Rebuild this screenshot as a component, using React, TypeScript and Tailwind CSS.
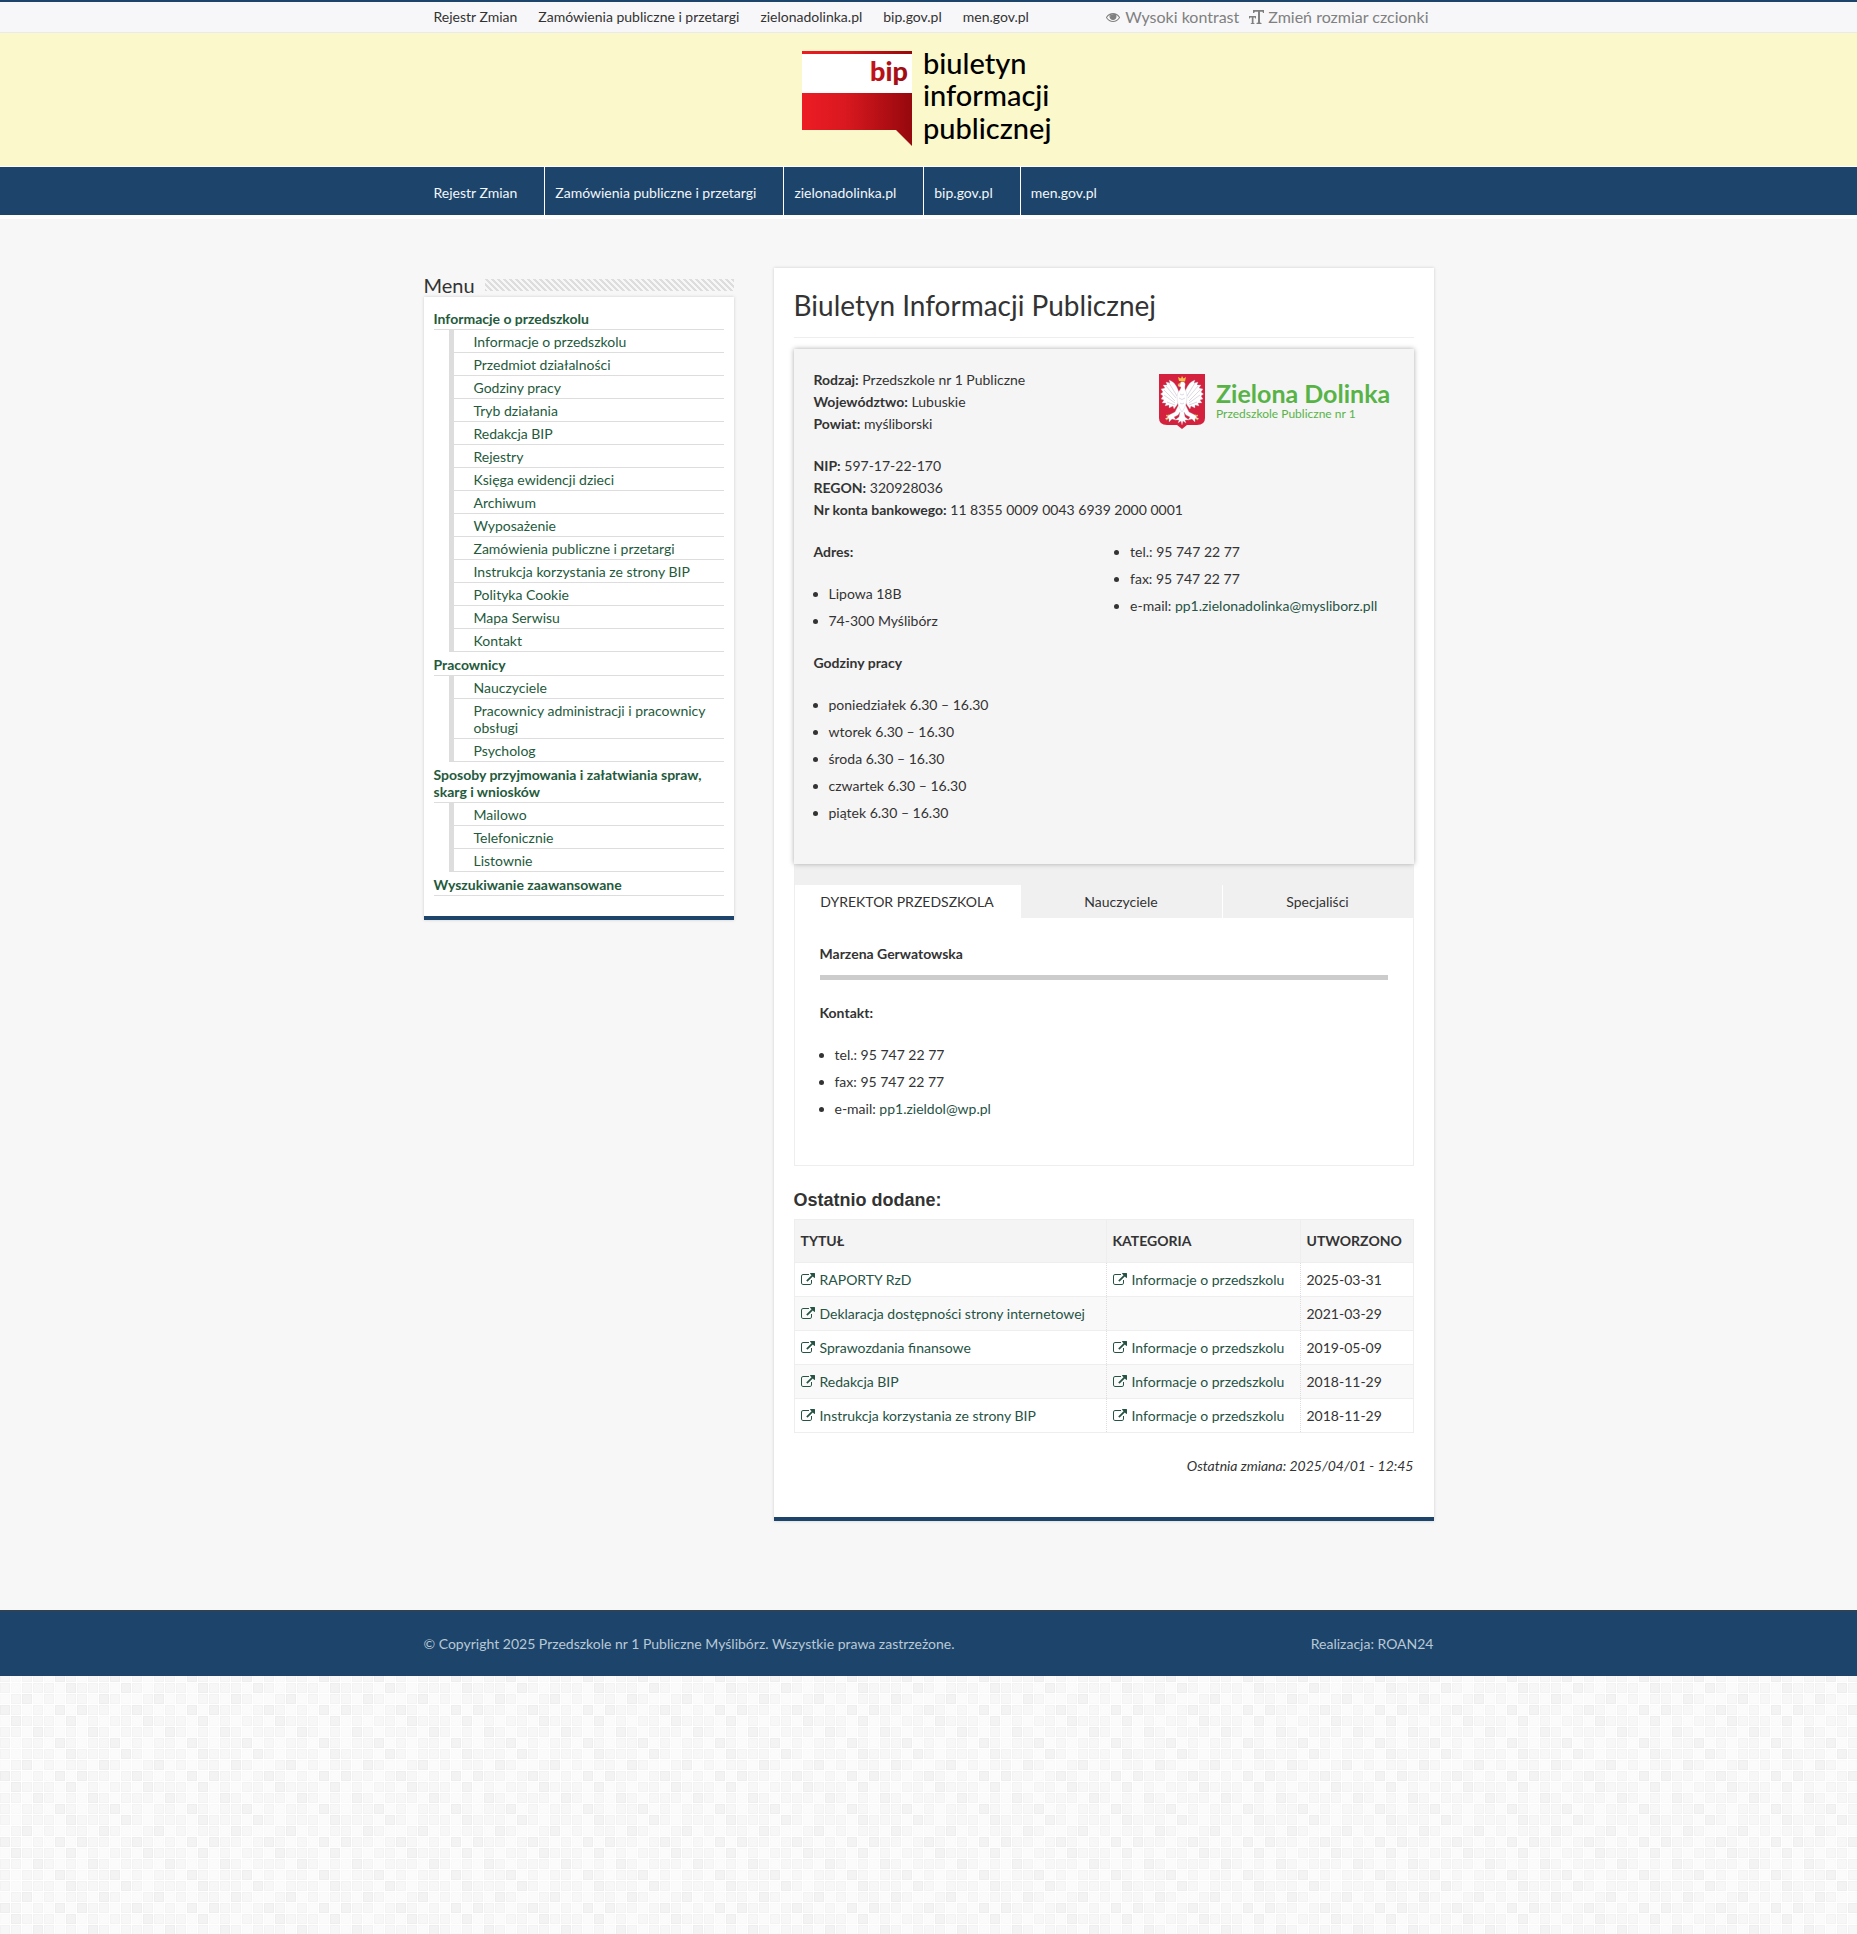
import { useState } from "react";
import clsx from "clsx";

const LINKS = [
  "Rejestr Zmian",
  "Zamówienia publiczne i przetargi",
  "zielonadolinka.pl",
  "bip.gov.pl",
  "men.gov.pl",
];

const MENU = [
  {
    label: "Informacje o przedszkolu",
    items: [
      "Informacje o przedszkolu",
      "Przedmiot działalności",
      "Godziny pracy",
      "Tryb działania",
      "Redakcja BIP",
      "Rejestry",
      "Księga ewidencji dzieci",
      "Archiwum",
      "Wyposażenie",
      "Zamówienia publiczne i przetargi",
      "Instrukcja korzystania ze strony BIP",
      "Polityka Cookie",
      "Mapa Serwisu",
      "Kontakt",
    ],
  },
  {
    label: "Pracownicy",
    items: ["Nauczyciele", "Pracownicy administracji i pracownicy obsługi", "Psycholog"],
  },
  {
    label: "Sposoby przyjmowania i załatwiania spraw, skarg i wniosków",
    items: ["Mailowo", "Telefonicznie", "Listownie"],
  },
  { label: "Wyszukiwanie zaawansowane", items: [] },
];

const HOURS = ["poniedziałek", "wtorek", "środa", "czwartek", "piątek"];

const TABS = [
  { label: "DYREKTOR PRZEDSZKOLA", width: "w-[226px]" },
  { label: "Nauczyciele", width: "w-[202px]" },
  { label: "Specjaliści", width: "flex-1" },
];

const ROWS = [
  { title: "RAPORTY RzD", category: "Informacje o przedszkolu", date: "2025-03-31" },
  { title: "Deklaracja dostępności strony internetowej", category: "", date: "2021-03-29" },
  { title: "Sprawozdania finansowe", category: "Informacje o przedszkolu", date: "2019-05-09" },
  { title: "Redakcja BIP", category: "Informacje o przedszkolu", date: "2018-11-29" },
  { title: "Instrukcja korzystania ze strony BIP", category: "Informacje o przedszkolu", date: "2018-11-29" },
];

// shade of each mosaic cell, 0 = lightest
const MOSAIC = [
  "021110201011",
  "110210102101",
  "101102101120",
  "101110211102",
  "012010110210",
  "210102021101",
];
const SHADES = ["#fbfbfb", "#f7f7f7", "#f3f3f3"];
const EDGES = ["#f9f9f9", "#f3f3f3", "#eeeeee"];

function EyeIcon() {
  return (
    <svg viewBox="0 0 1792 1792" className="size-[14px]" fill="currentColor" aria-hidden="true">
      <path d="M1664 960q-152-236-381-353 61 104 61 225 0 185-131.5 316.5t-316.5 131.5-316.5-131.5-131.5-316.5q0-121 61-225-229 117-381 353 133 205 333.5 326.5t434.5 121.5 434.5-121.5 333.5-326.5zm-720-384q0-20-14-34t-34-14q-125 0-214.5 89.5t-89.5 214.5q0 20 14 34t34 14 34-14 14-34q0-86 61-147t147-61q20 0 34-14t14-34zm848 384q0 34-20 69-140 230-376.5 368.5t-499.5 138.5-499.5-139-376.5-368q-20-35-20-69t20-69q140-229 376.5-368t499.5-139 499.5 139 376.5 368q20 35 20 69z" />
      <circle cx="896" cy="860" r="330" />
    </svg>
  );
}

function TextSizeIcon() {
  return (
    <svg viewBox="0 0 15 14" className="h-[14px] w-[15px]" fill="currentColor" aria-hidden="true">
      <path d="M4 0H15V3H14L13.500 1.800H11V12.500L12.500 13V14H7.500V13L9 12.500V1.800H6L5 3H4z" />
      <path d="M0 6H7V8.500H6.200L5.800 7.500H4.500V13L5.500 13.300V14H1.800V13.300L2.800 13V7.500H1.200L0.800 8.500H0z" />
    </svg>
  );
}

function ExternalIcon() {
  return (
    <svg viewBox="0 0 1792 1792" className="size-[14px] shrink-0" fill="currentColor" aria-hidden="true">
      <path d="M1408 928v320q0 119-84.5 203.5t-203.5 84.5h-832q-119 0-203.5-84.5t-84.5-203.5v-832q0-119 84.5-203.5t203.5-84.5h704q14 0 23 9t9 23v64q0 14-9 23t-23 9h-704q-66 0-113 47t-47 113v832q0 66 47 113t113 47h832q66 0 113-47t47-113v-320q0-14 9-23t23-9h64q14 0 23 9t9 23zm384-864v512q0 26-19 45t-45 19-45-19l-176-176-652 652q-10 10-23 10t-23-10l-114-114q-10-10-10-23t10-23l652-652-176-176q-19-19-19-45t19-45 45-19h512q26 0 45 19t19 45z" />
    </svg>
  );
}

function BipLogo() {
  return (
    <svg viewBox="0 0 254 100" className="h-[100px] w-[254px] overflow-visible" role="img" aria-label="Biuletyn informacji publicznej">
      <defs>
        <linearGradient id="bipRed" x1="0" x2="1">
          <stop offset="0" stopColor="#ed1c24" />
          <stop offset="0.4" stopColor="#d9181f" />
          <stop offset="1" stopColor="#95080d" />
        </linearGradient>
        <linearGradient id="bipWord" x1="0" x2="1">
          <stop offset="0" stopColor="#c5141b" />
          <stop offset="1" stopColor="#9a0c11" />
        </linearGradient>
      </defs>
      <rect x="0" y="1" width="110" height="42" fill="#fff" />
      <rect x="0" y="1" width="110" height="3" fill="url(#bipRed)" />
      <path d="M0 43H110V96L94 80H0z" fill="url(#bipRed)" />
      <text x="68" y="31" fontFamily="Lato, sans-serif" fontSize="27" fontWeight="900" fill="url(#bipWord)">bip</text>
      <g fontFamily="Lato, sans-serif" fontSize="29" fontWeight="500" fill="#000">
        <text x="121" y="24">biuletyn</text>
        <text x="121" y="56">informacji</text>
        <text x="121" y="89">publicznej</text>
      </g>
    </svg>
  );
}

function SchoolLogo() {
  return (
    <svg viewBox="0 0 235 60" className="h-[60px] w-[235px] overflow-visible" role="img" aria-label="Zielona Dolinka">
      <path d="M0 0H46V44Q46 51 38 51H28L23 55L18 51H8Q0 51 0 44z" fill="#d4213d" />
      <g fill="#fff" stroke="#b9b3c4" strokeWidth="0.300">
        {/* left wing, right wing, tail and legs, head and body */}
        <path d="M20 18C18 13 16 8 10 6L11 9L7 8L8 11L4 11L6 14L2 15L4 18L1.500 20L4 22L2 25L5 26L3 29L7 29L6 32L10 31L10 34L14 32L15 35L18 31L20 27z" />
        <path d="M26 18C28 13 30 8 36 6L35 9L39 8L38 11L42 11L40 14L44 15L42 18L44.500 20L42 22L44 25L41 26L43 29L39 29L40 32L36 31L36 34L32 32L31 35L28 31L26 27z" />
        <path d="M20 30L16 38L10 41L7 41L9 43L6 45L10 45L10 48L13 45L17 46L15 43L19 41L21 38L20 43L16 46L20 46L19 49L22 47L23 51L24 47L27 49L26 46L30 46L26 43L25 38L27 41L31 43L29 46L33 45L36 48L36 45L40 45L37 43L39 41L36 41L30 38L26 30z" />
        <path d="M22 8C25 7 27 9 26 12C25 15 28 17 28 22C28 29 26 34 23 38C20 34 18 29 18 22C18 18 22 16 22 13L19 12z" />
      </g>
      <g stroke="#b9b3c4" strokeWidth="0.500" fill="none">
        <path d="M7 12L17 24M5 16L16 27M5 21L16 29M10 9L18 22M8 28L16 31" />
        <path d="M39 12L29 24M41 16L30 27M41 21L30 29M36 9L28 22M38 28L30 31" />
        <path d="M21 20Q23 22 25 20M20 24Q23 27 26 24M21 29Q23 31 25 29" />
      </g>
      <path d="M20 7L19 3L22 4.500L23 2L24.500 4.500L27 3L26 7.500z" fill="#f2c14b" />
      <path d="M22 9L18.500 10L20.500 12z" fill="#e9b53f" />
      <path d="M10 41L7 42M10 44L7 46M36 41L39 42M36 44L39 46" stroke="#e9b53f" strokeWidth="1" />
      <g fontFamily="Lato, sans-serif" fill="#58b347">
        <text x="57" y="29" fontSize="25" fontWeight="700">Zielona Dolinka</text>
        <text x="57" y="44" fontSize="12">Przedszkole Publiczne nr 1</text>
      </g>
    </svg>
  );
}

function Mosaic() {
  return (
    <svg className="absolute inset-0 size-full" aria-hidden="true">
      <defs>
        <pattern id="mosaic" width="132" height="66" y="-26" patternUnits="userSpaceOnUse">
          <rect width="132" height="66" fill="#fff" />
          {MOSAIC.map((row, y) =>
            [...row].map((cell, x) => (
              <g key={`${x}-${y}`}>
                <rect x={x * 11} y={y * 11} width="10" height="10" fill={EDGES[Number(cell)]} />
                <rect x={x * 11 + 1} y={y * 11 + 1} width="8" height="8" fill={SHADES[Number(cell)]} />
              </g>
            )),
          )}
        </pattern>
      </defs>
      <rect width="100%" height="100%" fill="url(#mosaic)" />
    </svg>
  );
}

function Sidebar() {
  return (
    <aside className="w-[310px] pt-[5px]">
      <div className="flex items-center gap-[10px]">
        <h2 className="text-xl leading-6">Menu</h2>
        <span className="h-3 flex-1 bg-[linear-gradient(45deg,#ddd_25%,transparent_25%,transparent_50%,#ddd_50%,#ddd_75%,transparent_75%)] bg-[length:6px_6px]" />
      </div>
      <nav
        aria-label="Menu"
        className="border-b-4 border-[#1d456b] bg-white px-[10px] pt-[10px] pb-5 leading-[17px] text-[#245a3c] shadow-[0_0_3px_#ccc]"
      >
        <ul>
          {MENU.map((group) => (
            <li key={group.label}>
              <a href="#" className="block border-b border-[#ddd] pt-[3px] pb-[2px] font-bold">
                {group.label}
              </a>
              {group.items.length > 0 && (
                <ul className="mb-px ml-[15px] border-l-[5px] border-[#ddd]">
                  {group.items.map((item) => (
                    <li key={item} className="border-b border-[#ddd] pt-[3px] pb-[2px] pl-5">
                      <a href="#" className="block">
                        {item}
                      </a>
                    </li>
                  ))}
                </ul>
              )}
            </li>
          ))}
        </ul>
      </nav>
    </aside>
  );
}

function InfoBox() {
  return (
    <section className="relative bg-[#f5f5f5] p-5 shadow-[0_0_5px_#aaa]">
      <div className="flex justify-between">
        <p>
          <b>Rodzaj:</b> Przedszkole nr 1 Publiczne
          <br />
          <b>Województwo:</b> Lubuskie
          <br />
          <b>Powiat:</b> myśliborski
        </p>
        <div className="-mb-5 pt-[5px]">
          <SchoolLogo />
        </div>
      </div>
      <p className="mt-5">
        <b>NIP:</b> 597-17-22-170
        <br />
        <b>REGON:</b> 320928036
        <br />
        <b>Nr konta bankowego:</b> 11 8355 0009 0043 6939 2000 0001
      </p>
      <div className="mt-5 flex gap-[4%]">
        <div className="w-[48%]">
          <p className="mb-5 font-bold">Adres:</p>
          <ul className="mb-[15px] ml-[15px] list-disc">
            <li className="pb-[5px]">Lipowa 18B</li>
            <li className="pb-[5px]">74-300 Myślibórz</li>
          </ul>
          <p className="mb-5 font-bold">Godziny pracy</p>
          <ul className="mb-[15px] ml-[15px] list-disc">
            {HOURS.map((day) => (
              <li key={day} className="pb-[5px]">
                {day} 6.30 – 16.30
              </li>
            ))}
          </ul>
        </div>
        <ul className="ml-[15px] flex-1 list-disc">
          <li className="pb-[5px]">tel.: 95 747 22 77</li>
          <li className="pb-[5px]">fax: 95 747 22 77</li>
          <li className="pb-[5px]">
            e-mail: <a href="#" className="text-[#265344]">pp1.zielonadolinka@mysliborz.pll</a>
          </li>
        </ul>
      </div>
    </section>
  );
}

function StaffTabs() {
  const [active, setActive] = useState(0);

  return (
    <section className="border border-t-0 border-[#eee]">
      <div role="tablist" className="flex bg-[#f0f0f0] pt-[21px]">
        {TABS.map((tab, i) => (
          <button
            key={tab.label}
            type="button"
            role="tab"
            aria-selected={active === i}
            onClick={() => setActive(i)}
            className={clsx(
              "h-[33px] border-r border-white last:border-r-0",
              tab.width,
              active === i && "bg-white",
            )}
          >
            {tab.label}
          </button>
        ))}
      </div>
      <div role="tabpanel" className="p-[25px]">
        <p className="font-bold">Marzena Gerwatowska</p>
        <hr className="mt-[10px] mb-[22px] border-t-[5px] border-[#ccc]" />
        <p className="mb-5 font-bold">Kontakt:</p>
        <ul className="mb-[15px] ml-[15px] list-disc">
          <li className="pb-[5px]">tel.: 95 747 22 77</li>
          <li className="pb-[5px]">fax: 95 747 22 77</li>
          <li className="pb-[5px]">
            e-mail: <a href="#" className="text-[#265344]">pp1.zieldol@wp.pl</a>
          </li>
        </ul>
      </div>
    </section>
  );
}

function EntryLink({ label }: { label: string }) {
  return (
    <a href="#" className="flex items-center gap-[5px] text-[#265344]">
      <ExternalIcon />
      {label}
    </a>
  );
}

function RecentTable() {
  return (
    <table className="w-full border-collapse border border-[#eee] text-left">
      <thead>
        <tr className="h-[43px] border-b border-[#eee] bg-[#f4f4f4]">
          <th className="w-[312px] border-r border-[#eee] px-[6px]">TYTUŁ</th>
          <th className="w-[194px] border-r border-[#eee] px-[6px]">KATEGORIA</th>
          <th className="px-[6px]">UTWORZONO</th>
        </tr>
      </thead>
      <tbody>
        {ROWS.map((row) => (
          <tr key={row.title} className="h-[34px] border-b border-[#eee] even:bg-[#f9f9f9]">
            <td className="border-r border-dotted border-r-[#ddd] px-[6px]">
              <EntryLink label={row.title} />
            </td>
            <td className="border-r border-dotted border-r-[#ddd] px-[6px]">
              {row.category && <EntryLink label={row.category} />}
            </td>
            <td className="px-[6px]">{row.date}</td>
          </tr>
        ))}
      </tbody>
    </table>
  );
}

export default function App() {
  return (
    <div className="flex min-h-screen flex-col bg-white font-[Lato,sans-serif] text-sm leading-[22px] text-[#333]">
      <div className="border-t-2 border-b border-t-[#1d456b] border-b-[#eaeaea] bg-[#f7f7f9]">
        <div className="mx-auto flex h-[30px] w-[1010px] max-w-full items-center justify-between">
          <nav aria-label="Skróty" className="flex gap-px">
            {LINKS.map((link) => (
              <a key={link} href="#" className="px-[10px]">
                {link}
              </a>
            ))}
          </nav>
          <div className="flex gap-[10px] pr-[5px] text-base text-[#808080]">
            <button type="button" className="flex items-center gap-[5px]">
              <EyeIcon />
              Wysoki kontrast
            </button>
            <button type="button" className="flex items-center gap-1">
              <TextSizeIcon />
              Zmień rozmiar czcionki
            </button>
          </div>
        </div>
      </div>

      <header className="flex h-[133px] justify-center bg-[#fbf8cb] pt-[17px]">
        <BipLogo />
      </header>

      <div className="mt-px border-b-4 border-white bg-[#1d456b]">
        <nav aria-label="Główne" className="mx-auto flex w-[1010px] max-w-full text-[#f2f6fa]">
          {LINKS.map((link) => (
            <a key={link} href="#" className="h-12 border-r border-white pt-[15px] pr-[27px] pl-[10px] last:border-r-0">
              {link}
            </a>
          ))}
        </nav>
      </div>

      <div className="bg-[#f7f7f7] pt-[49px] pb-[89px]">
        <div className="mx-auto flex w-[1010px] max-w-full items-start justify-between">
          <Sidebar />
          <main className="w-[660px] border-b-4 border-[#1d456b] bg-white px-5 pt-5 pb-10 shadow-[0_0_3px_#ccc]">
            <h1 className="mb-[11px] border-b border-[#eee] pb-[15px] text-[28px] leading-[34px]">
              Biuletyn Informacji Publicznej
            </h1>
            <InfoBox />
            <StaffTabs />
            <h2 className="mt-[22px] mb-[7px] font-['Liberation_Sans',sans-serif] text-lg leading-6 font-bold">
              Ostatnio dodane:
            </h2>
            <RecentTable />
            <p className="mt-[22px] text-right italic">Ostatnia zmiana: 2025/04/01 - 12:45</p>
          </main>
        </div>
      </div>

      <footer className="border-t-2 border-[#2b4257] bg-[#1d456b] text-[#b9c8d6]">
        <div className="mx-auto flex h-16 w-[1010px] max-w-full items-center justify-between">
          <p>© Copyright 2025 Przedszkole nr 1 Publiczne Myślibórz. Wszystkie prawa zastrzeżone.</p>
          <p>Realizacja: ROAN24</p>
        </div>
      </footer>

      <div className="relative flex-1">
        <Mosaic />
      </div>
    </div>
  );
}
